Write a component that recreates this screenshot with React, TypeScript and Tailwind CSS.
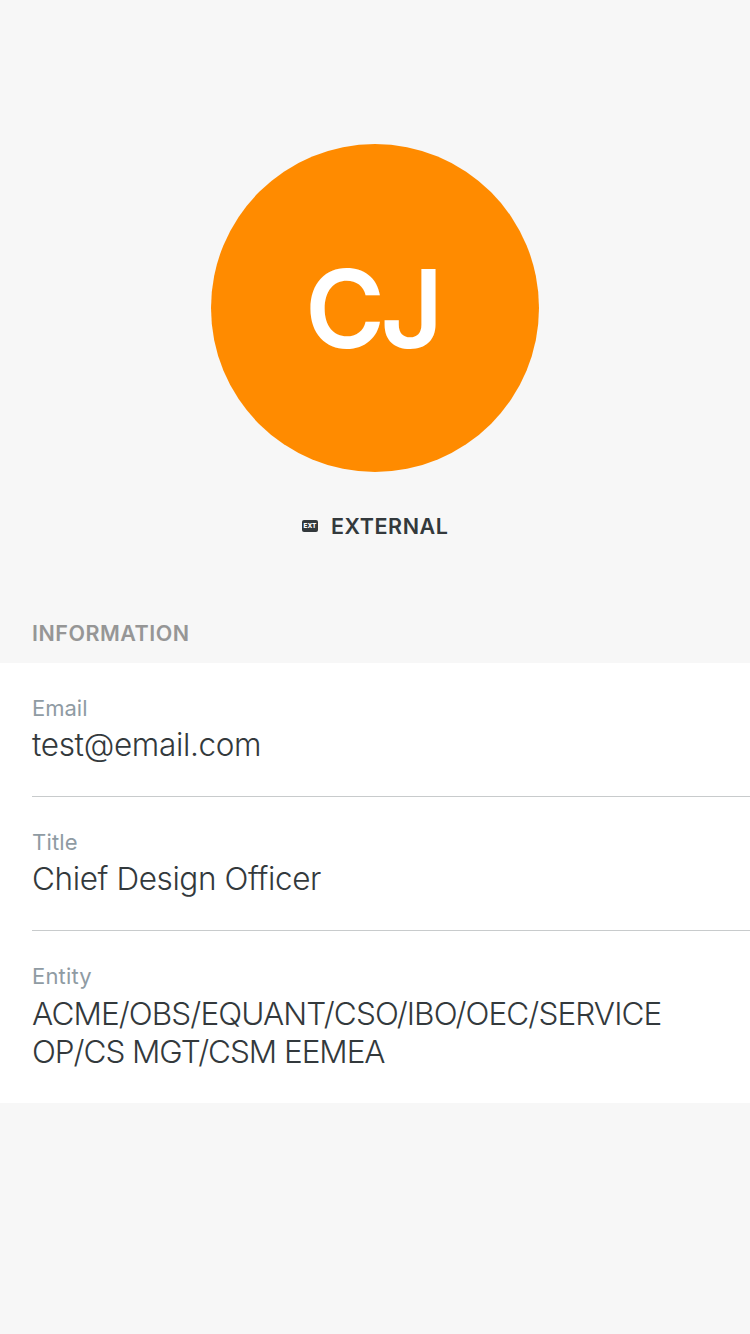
const fields = [
  { label: "Email", tracking: "tracking-[0px]", gap: "mt-[4px]", lines: [{ text: "test@email.com", tracking: "tracking-[-0.35px]" }] },
  { label: "Title", tracking: "tracking-[0.2px]", gap: "mt-[4px]", lines: [{ text: "Chief Design Officer", tracking: "tracking-[-0.4px]" }] },
  {
    label: "Entity",
    tracking: "tracking-[0.2px]",
    gap: "mt-[5px]",
    lines: [
      { text: "ACME/OBS/EQUANT/CSO/IBO/OEC/SERVICE", tracking: "tracking-[-0.9px]" },
      { text: "OP/CS MGT/CSM EEMEA", tracking: "tracking-[-1.05px]" },
    ],
  },
];

function ExternalIcon() {
  return (
    <svg className="h-3 w-4" viewBox="0 0 16 12">
      <rect width="16" height="12" rx="2" fill="#33393c" />
      <text
        x="1.6"
        y="8.4"
        fill="#ffffff"
        fontSize="6.6"
        fontWeight="800"
        fontFamily="Inter, sans-serif"
        textLength="12.8"
        lengthAdjust="spacingAndGlyphs"
      >
        EXT
      </text>
    </svg>
  );
}

export default function App() {
  return (
    <main className="flex h-[1334px] w-[750px] flex-col overflow-hidden bg-[#f7f7f7] font-['Inter',sans-serif] text-[#33393c]">
      <header className="flex flex-col items-center pt-36">
        <div className="flex size-[328px] items-center justify-center rounded-full bg-[#ff8b00] pt-[2px] text-[108.5px] leading-none font-semibold text-white">
          <span className="mr-[6px] tracking-[-4.5px]">CJ</span>
        </div>
        <div className="mt-[38px] flex h-8 items-center gap-[13px]">
          <ExternalIcon />
          <span className="w-[117px] text-[21.5px] leading-8 font-semibold tracking-[0.55px] whitespace-nowrap">EXTERNAL</span>
        </div>
      </header>
      <h2 className="mt-[75px] h-[46px] pl-8 text-[21.5px] leading-8 font-semibold tracking-[0.5px] text-[#969696]">
        INFORMATION
      </h2>
      <dl className="h-[440px] bg-white pl-8">
        {fields.map((field) => (
          <div key={field.label} className="h-[134px] border-b border-[#c8cbcc] pt-[31px] last:border-0">
            <dt className={"text-[22px] leading-7 text-[#8f9ba3] " + field.tracking}>{field.label}</dt>
            <dd className={"text-[31.5px] leading-[38px] font-light " + field.gap}>
              {field.lines.map((line) => (
                <span key={line.text} className={"block whitespace-nowrap " + line.tracking}>{line.text}</span>
              ))}
            </dd>
          </div>
        ))}
      </dl>
    </main>
  );
}
